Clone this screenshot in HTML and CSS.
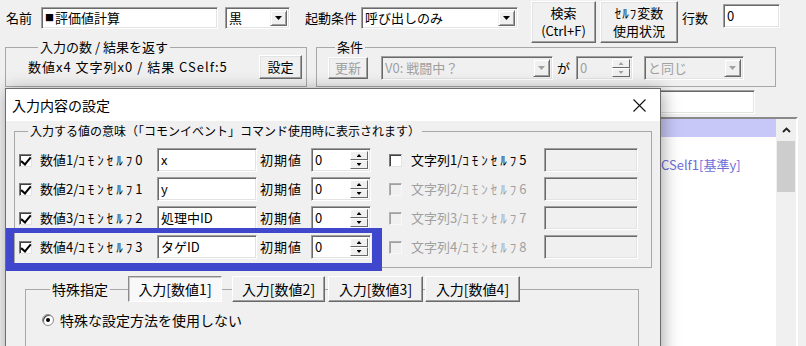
FILE: index.html
```html
<!DOCTYPE html>
<html lang="ja">
<head>
    <meta charset="UTF-8">
    <meta name="viewport" content="width=device-width, initial-scale=1.0">
    <title>入力内容の設定</title>
    <link rel="stylesheet" href="styles.css">
</head>
<body>
<div class="main">
    <div class="toolbar">
        <span class="lbl name-lbl">名前</span>
        <div class="edit name-edit"><span class="sq">■</span>評価値計算</div>
        <div class="combo color-combo"><span class="combo-val">黒</span><span class="drop"></span></div>
        <span class="lbl start-lbl">起動条件</span>
        <div class="combo start-combo"><span class="combo-val">呼び出しのみ</span><span class="drop"></span></div>
        <div class="btn tall-btn search-btn">検索<br>(Ctrl+F)</div>
        <div class="btn tall-btn self-btn"><span><span class="hk">ｾﾙﾌ</span>変数<br>使用状況</span></div>
        <span class="lbl lines-lbl">行数</span>
        <div class="edit lines-edit">0</div>
    </div>
    <div class="groups">
        <fieldset class="group count-group">
            <legend>入力の数 / 結果を返す</legend>
            <div class="group-body">
                <span class="count-text">数値x4 文字列x0 / 結果 CSelf:5</span>
                <div class="btn set-btn">設定</div>
            </div>
        </fieldset>
        <fieldset class="group cond-group">
            <legend>条件</legend>
            <div class="group-body">
                <div class="btn update-btn off">更新</div>
                <div class="combo off v0-combo"><span class="combo-val">V0: 戦闘中？</span><span class="drop"></span></div>
                <span class="ga">が</span>
                <div class="spin off cond-spin"><span class="spin-val">0</span><span class="spin-btns"><i class="up"></i><i class="down"></i></span></div>
                <div class="combo off same-combo"><span class="combo-val">と同じ</span><span class="drop"></span></div>
            </div>
        </fieldset>
    </div>
    <div class="lower">
        <div class="edit cmd-edit"></div>
        <div class="list">
            <div class="list-body">
                <div class="line selected"></div>
                <div class="line"></div>
                <div class="line cmd">CSelf1[基準y]</div>
            </div>
            <div class="vscroll">
                <span class="arrow-up"><svg width="9" height="6" viewBox="0 0 9 6"><polyline points="1,5 4.5,1.5 8,5" fill="none" stroke="#222" stroke-width="1.8"/></svg></span>
                <span class="thumb"></span>
            </div>
        </div>
    </div>
</div>

<div class="dialog">
    <div class="titlebar">
        <span class="title">入力内容の設定</span>
        <svg class="close" width="13" height="13" viewBox="0 0 13 13"><path d="M0.5 0.5 L12.5 12.5 M12.5 0.5 L0.5 12.5" stroke="#111" stroke-width="1.1"/></svg>
    </div>
    <div class="dlg-body">
        <fieldset class="group meaning">
            <legend>入力する値の意味（「コモンイベント」コマンド使用時に表示されます）</legend>
            <div class="row">
                <span class="check on"></span>
                <span class="row-lbl">数値1/<span class="hk">ｺﾓﾝｾﾙﾌ</span>0</span>
                <div class="edit meaning-edit">x</div>
                <span class="init-lbl">初期値</span>
                <div class="spin init-spin"><span class="spin-val">0</span><span class="spin-btns"><i class="up"></i><i class="down"></i></span></div>
                <span class="check right"></span>
                <span class="row-lbl str-lbl">文字列1/<span class="hk">ｺﾓﾝｾﾙﾌ</span>5</span>
                <div class="edit off str-edit"></div>
            </div>
            <div class="row">
                <span class="check on"></span>
                <span class="row-lbl">数値2/<span class="hk">ｺﾓﾝｾﾙﾌ</span>1</span>
                <div class="edit meaning-edit">y</div>
                <span class="init-lbl">初期値</span>
                <div class="spin init-spin"><span class="spin-val">0</span><span class="spin-btns"><i class="up"></i><i class="down"></i></span></div>
                <span class="check right off"></span>
                <span class="row-lbl str-lbl off">文字列2/<span class="hk">ｺﾓﾝｾﾙﾌ</span>6</span>
                <div class="edit off str-edit"></div>
            </div>
            <div class="row">
                <span class="check on"></span>
                <span class="row-lbl">数値3/<span class="hk">ｺﾓﾝｾﾙﾌ</span>2</span>
                <div class="edit meaning-edit">処理中ID</div>
                <span class="init-lbl">初期値</span>
                <div class="spin init-spin"><span class="spin-val">0</span><span class="spin-btns"><i class="up"></i><i class="down"></i></span></div>
                <span class="check right off"></span>
                <span class="row-lbl str-lbl off">文字列3/<span class="hk">ｺﾓﾝｾﾙﾌ</span>7</span>
                <div class="edit off str-edit"></div>
            </div>
            <div class="row">
                <span class="check on"></span>
                <span class="row-lbl">数値4/<span class="hk">ｺﾓﾝｾﾙﾌ</span>3</span>
                <div class="edit meaning-edit">タゲID</div>
                <span class="init-lbl">初期値</span>
                <div class="spin init-spin"><span class="spin-val">0</span><span class="spin-btns"><i class="up"></i><i class="down"></i></span></div>
                <span class="check right off"></span>
                <span class="row-lbl str-lbl off">文字列4/<span class="hk">ｺﾓﾝｾﾙﾌ</span>8</span>
                <div class="edit off str-edit"></div>
            </div>
        </fieldset>
        <div class="special">
            <fieldset class="group special-group">
                <legend>特殊指定</legend>
                <div class="radio-row"><span class="radio"></span><span class="radio-lbl">特殊な設定方法を使用しない</span></div>
            </fieldset>
            <div class="tabs">
                <span class="tab active">入力[数値1]</span>
                <span class="tab tab2">入力[数値2]</span>
                <span class="tab tab3">入力[数値3]</span>
                <span class="tab tab4">入力[数値4]</span>
            </div>
        </div>
    </div>
</div>

<div class="mark"></div>
</body>
</html>
```

FILE: styles.css
```css
*{
    margin: 0;
    padding: 0;
    box-sizing: border-box;
}
html,body{
    width: 100%;
    height: 100%;
    overflow: hidden;
}
body{
    position: relative;
    background-color: #f0f0f0;
    font-family: "Noto Sans CJK JP", "Noto Sans", sans-serif;
    font-size: 13px;
    line-height: 16px;
    color: #000;
}

/* 共通コントロール */
.edit{
    display: flex;
    align-items: center;
    padding: 0 3px;
    background-color: #fff;
    border: 1px solid;
    border-color: #a0a0a0 #fff #fff #a0a0a0;
    box-shadow: inset 1px 1px 0 #696969, inset -1px -1px 0 #e3e3e3;
    white-space: nowrap;
}
.edit.off{
    background-color: #f0f0f0;
}
.sq{
    font-size: 9px;
    margin-right: 1px;
}
.hk{
    letter-spacing: 3px;
}
.btn{
    display: flex;
    align-items: center;
    justify-content: center;
    text-align: center;
    white-space: nowrap;
    background-color: #f0f0f0;
    border: 1px solid;
    border-color: #fff #696969 #696969 #fff;
    box-shadow: inset -1px -1px 0 #a0a0a0, inset 1px 1px 0 #e3e3e3;
}
.btn.off{
    color: #a0a0a0;
}
.combo{
    display: flex;
    padding: 2px;
    background-color: #fff;
    border: 1px solid;
    border-color: #a0a0a0 #fff #fff #a0a0a0;
    box-shadow: inset 1px 1px 0 #696969, inset -1px -1px 0 #e3e3e3;
}
.combo.off{
    background-color: #f0f0f0;
    color: #a0a0a0;
}
.combo-val{
    flex: 1;
    align-self: center;
    padding-left: 1px;
    white-space: nowrap;
}
.drop{
    display: flex;
    align-items: center;
    justify-content: center;
    width: 17px;
    background-color: #f0f0f0;
    border: 1px solid;
    border-color: #f0f0f0 #696969 #696969 #f0f0f0;
    box-shadow: inset 1px 1px 0 #fff, inset -1px -1px 0 #a0a0a0;
}
.drop::after{
    content: "";
    width: 7px;
    height: 4px;
    background-color: #000;
    clip-path: polygon(0 0, 100% 0, 50% 100%);
}
.combo.off .drop::after{
    background-color: #a0a0a0;
}
.spin{
    display: flex;
    padding: 2px;
    background-color: #fff;
    border: 1px solid;
    border-color: #a0a0a0 #fff #fff #a0a0a0;
    box-shadow: inset 1px 1px 0 #696969, inset -1px -1px 0 #e3e3e3;
}
.spin.off{
    background-color: #f0f0f0;
    color: #a0a0a0;
}
.spin-val{
    flex: 1;
    align-self: center;
    padding-left: 1px;
}
.spin-btns{
    display: flex;
    flex-direction: column;
    width: 18px;
}
.spin-btns i{
    flex: 1;
    display: flex;
    align-items: center;
    justify-content: center;
    background-color: #f0f0f0;
    border: 1px solid;
    border-color: #fff #696969 #696969 #fff;
}
.spin-btns i::after{
    content: "";
    width: 5px;
    height: 3px;
    background-color: #000;
}
.spin-btns .up::after{
    clip-path: polygon(50% 0, 100% 100%, 0 100%);
}
.spin-btns .down::after{
    clip-path: polygon(0 0, 100% 0, 50% 100%);
}
.spin.off .spin-btns i::after{
    background-color: #a0a0a0;
}
.group{
    border: 1px solid #a8a8a8;
    min-width: 0;
}
.group legend{
    padding: 0 2px;
    line-height: 14px;
}
.off{
    color: #a0a0a0;
}

/* ツールバー */
.toolbar{
    display: flex;
    align-items: flex-start;
    height: 44px;
}
.lbl{
    margin-top: 7px;
    line-height: 22px;
    white-space: nowrap;
}
.name-lbl{
    margin-left: 6px;
    width: 35px;
}
.name-edit{
    width: 177px;
    height: 22px;
    margin-top: 7px;
}
.color-combo{
    width: 65px;
    height: 22px;
    margin: 7px 0 0 7px;
}
.start-lbl{
    margin-left: 15px;
    width: 56px;
}
.start-combo{
    width: 157px;
    height: 22px;
    margin-top: 7px;
}
.tall-btn{
    height: 42px;
    margin-top: 1px;
    line-height: 18px;
}
.search-btn{
    width: 65px;
    margin-left: 13px;
}
.self-btn{
    width: 78px;
    margin-left: 4px;
}
.self-btn .hk{
    letter-spacing: 1px;
}
.lines-lbl{
    margin-left: 4px;
    width: 41px;
}
.lines-edit{
    width: 57px;
    height: 24px;
    margin-top: 4px;
}

/* グループ */
.groups{
    display: flex;
    margin-top: -4px;
}
.count-group{
    width: 302px;
    height: 47px;
    margin-left: 5px;
    padding: 0 4px 0 22px;
}
.count-group legend{
    margin-left: 10px;
}
.group-body{
    display: flex;
    align-items: center;
    height: 24px;
    margin-top: 1px;
}
.count-text{
    flex: 1;
    letter-spacing: 1px;
    white-space: nowrap;
}
.set-btn{
    width: 43px;
    height: 24px;
}
.cond-group{
    width: 460px;
    height: 47px;
    margin-left: 9px;
    padding: 0 0 0 11px;
}
.cond-group legend{
    margin-left: 7px;
}
.cond-group .group-body{
    margin-top: 2px;
}
.update-btn{
    width: 40px;
    height: 22px;
}
.v0-combo{
    width: 172px;
    height: 24px;
    margin-left: 13px;
}
.ga{
    width: 19px;
    margin-left: 4px;
}
.cond-spin{
    width: 57px;
    height: 24px;
}
.same-combo{
    width: 100px;
    height: 24px;
    margin-left: 11px;
}

/* 下のリスト */
.lower{
    padding-left: 300px;
    margin-top: 1px;
}
.cmd-edit{
    width: 455px;
    height: 24px;
    margin-top: 3px;
}
.list{
    display: flex;
    width: 498px;
    height: 240px;
    margin-top: 3px;
    border: 2px solid;
    border-color: #8a8a8a #fff #fff #8a8a8a;
    background-color: #fff;
}
.list-body{
    flex: 1;
}
.line{
    height: 18px;
    line-height: 18px;
    white-space: nowrap;
}
.line.selected{
    background-color: #c8c8f8;
}
.line.cmd{
    margin-top: 1px;
    padding-left: 359px;
    color: #6d6dd8;
}
.vscroll{
    display: flex;
    flex-direction: column;
    width: 20px;
    background-color: #f0f0f0;
}
.arrow-up{
    display: flex;
    align-items: center;
    justify-content: center;
    height: 22px;
}
.thumb{
    height: 51px;
    margin: 0 1px;
    background-color: #cdcdcd;
}

/* ダイアログ */
.dialog{
    position: absolute;
    left: 5px;
    top: 88px;
    z-index: 2;
    width: 656px;
    height: 290px;
    background-color: #f0f0f0;
    border: 1px solid #6d6d6d;
    box-shadow: 2px 2px 16px rgba(0,0,0,0.35);
}
.titlebar{
    display: flex;
    align-items: center;
    height: 32px;
    padding: 0 14px 0 6px;
    background-color: #fff;
}
.title{
    flex: 1;
    font-size: 14px;
}
.dlg-body{
    padding: 3px 8px 0;
}
.meaning{
    width: 638px;
    padding: 10px 0 8px 4px;
}
.meaning legend{
    margin-left: 9px;
    font-size: 12px;
}
.row{
    display: flex;
    align-items: center;
    height: 24px;
    margin-bottom: 5px;
}
.row:last-child{
    margin-bottom: 0;
}
.check{
    position: relative;
    width: 13px;
    height: 13px;
    background-color: #fff;
    border: 1px solid;
    border-color: #7a7a7a #e3e3e3 #e3e3e3 #7a7a7a;
    box-shadow: inset 1px 1px 0 #404040;
}
.check.on::after{
    content: "";
    position: absolute;
    left: 3px;
    top: 0;
    width: 4px;
    height: 8px;
    border-right: 2px solid #000;
    border-bottom: 2px solid #000;
    transform: rotate(40deg);
}
.check.off{
    background-color: #f0f0f0;
    border-color: #b0b0b0 #f8f8f8 #f8f8f8 #b0b0b0;
    box-shadow: inset 1px 1px 0 #a0a0a0;
}
.check.right{
    margin-left: 18px;
}
.row-lbl{
    width: 117px;
    margin-left: 8px;
    white-space: nowrap;
}
.meaning-edit{
    width: 100px;
    height: 24px;
}
.init-lbl{
    width: 51px;
    margin-left: 3px;
    letter-spacing: 1px;
}
.init-spin{
    width: 60px;
    height: 24px;
}
.str-lbl{
    width: 133px;
    margin-left: 9px;
}
.str-edit{
    width: 94px;
    height: 24px;
}
.special{
    position: relative;
    width: 614px;
    margin: 13px 0 0 11px;
}
.special-group{
    height: 80px;
    padding: 15px 0 0 16px;
    font-size: 14px;
}
.special-group legend{
    margin-left: 8px;
    line-height: 16px;
}
.radio-row{
    display: flex;
    align-items: center;
    height: 16px;
}
.radio{
    position: relative;
    width: 12px;
    height: 12px;
    border-radius: 50%;
    background-color: #fff;
    border: 1px solid #8a8a8a;
    box-shadow: inset 1px 1px 0 #505050;
}
.radio::after{
    content: "";
    position: absolute;
    left: 3px;
    top: 3px;
    width: 4px;
    height: 4px;
    border-radius: 50%;
    background-color: #000;
}
.radio-lbl{
    margin-left: 6px;
}
.tabs{
    position: absolute;
    left: 103px;
    top: -5px;
    display: flex;
    font-size: 14px;
}
.tab{
    display: flex;
    align-items: center;
    justify-content: center;
    height: 26px;
    background-color: #f0f0f0;
    border: 1px solid;
    border-color: #fff #696969 #696969 #fff;
    box-shadow: inset -1px -1px 0 #a0a0a0;
    white-space: nowrap;
}
.tab.active{
    width: 94px;
    background-color: #f8f8f8;
    border-color: #8a8a8a #fff #fff #8a8a8a;
    box-shadow: inset 1px 1px 0 #c8c8c8;
}
.tab2{
    width: 93px;
    margin-left: 10px;
}
.tab3{
    width: 95px;
    margin-left: 3px;
}
.tab4{
    width: 95px;
    margin-left: 2px;
}

/* 強調枠 */
.mark{
    position: absolute;
    left: 6px;
    top: 228px;
    z-index: 3;
    width: 376px;
    height: 43px;
    border-style: solid;
    border-color: #3f48cc;
    border-width: 5px 10px 8px 8px;
}
```
